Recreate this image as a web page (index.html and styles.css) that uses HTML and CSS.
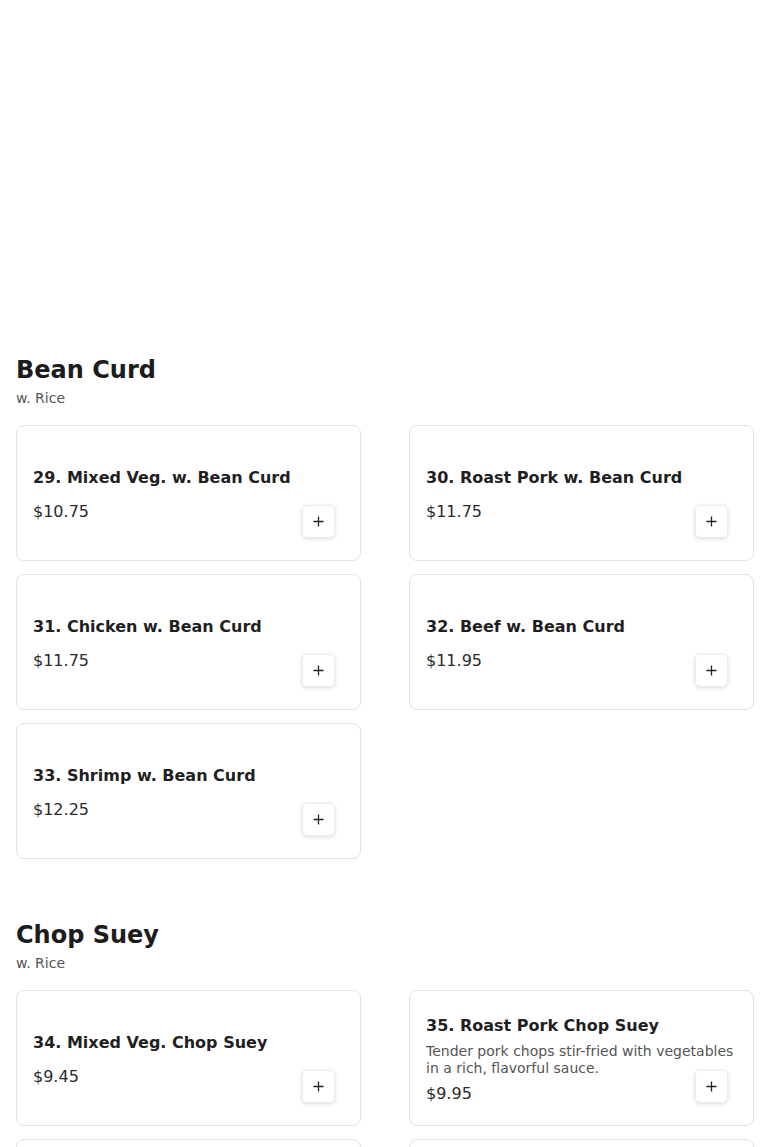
FILE: index.html
```html
<!DOCTYPE html>
<html>
<head>
<meta charset="utf-8">
<link rel="stylesheet" href="styles.css">
</head>
<body>
<div class="page">
  <div class="hero"></div>

  <section class="section">
    <h2 class="section-title">Bean Curd</h2>
    <p class="section-sub">w. Rice</p>
    <div class="grid">
      <div class="card">
        <h3 class="item-name">29. Mixed Veg. w. Bean Curd</h3>
        <div class="price">$10.75</div>
        <button class="add"><svg width="11" height="11" viewBox="0 0 11 11"><path d="M5.5 0.5v10M0.5 5.5h10" stroke="#222" stroke-width="1.3" fill="none"/></svg></button>
      </div>
      <div class="card">
        <h3 class="item-name">30. Roast Pork w. Bean Curd</h3>
        <div class="price">$11.75</div>
        <button class="add"><svg width="11" height="11" viewBox="0 0 11 11"><path d="M5.5 0.5v10M0.5 5.5h10" stroke="#222" stroke-width="1.3" fill="none"/></svg></button>
      </div>
      <div class="card">
        <h3 class="item-name">31. Chicken w. Bean Curd</h3>
        <div class="price">$11.75</div>
        <button class="add"><svg width="11" height="11" viewBox="0 0 11 11"><path d="M5.5 0.5v10M0.5 5.5h10" stroke="#222" stroke-width="1.3" fill="none"/></svg></button>
      </div>
      <div class="card">
        <h3 class="item-name">32. Beef w. Bean Curd</h3>
        <div class="price">$11.95</div>
        <button class="add"><svg width="11" height="11" viewBox="0 0 11 11"><path d="M5.5 0.5v10M0.5 5.5h10" stroke="#222" stroke-width="1.3" fill="none"/></svg></button>
      </div>
      <div class="card">
        <h3 class="item-name">33. Shrimp w. Bean Curd</h3>
        <div class="price">$12.25</div>
        <button class="add"><svg width="11" height="11" viewBox="0 0 11 11"><path d="M5.5 0.5v10M0.5 5.5h10" stroke="#222" stroke-width="1.3" fill="none"/></svg></button>
      </div>
    </div>
  </section>

  <section class="section">
    <h2 class="section-title">Chop Suey</h2>
    <p class="section-sub">w. Rice</p>
    <div class="grid">
      <div class="card">
        <h3 class="item-name">34. Mixed Veg. Chop Suey</h3>
        <div class="price">$9.45</div>
        <button class="add"><svg width="11" height="11" viewBox="0 0 11 11"><path d="M5.5 0.5v10M0.5 5.5h10" stroke="#222" stroke-width="1.3" fill="none"/></svg></button>
      </div>
      <div class="card">
        <h3 class="item-name">35. Roast Pork Chop Suey</h3>
        <p class="desc">Tender pork chops stir-fried with vegetables in a rich, flavorful sauce.</p>
        <div class="price">$9.95</div>
        <button class="add"><svg width="11" height="11" viewBox="0 0 11 11"><path d="M5.5 0.5v10M0.5 5.5h10" stroke="#222" stroke-width="1.3" fill="none"/></svg></button>
      </div>
      <div class="card">
        <h3 class="item-name">36. Chicken Chop Suey</h3>
        <div class="price">$9.95</div>
        <button class="add"><svg width="11" height="11" viewBox="0 0 11 11"><path d="M5.5 0.5v10M0.5 5.5h10" stroke="#222" stroke-width="1.3" fill="none"/></svg></button>
      </div>
      <div class="card">
        <h3 class="item-name">37. Beef Chop Suey</h3>
        <div class="price">$10.25</div>
        <button class="add"><svg width="11" height="11" viewBox="0 0 11 11"><path d="M5.5 0.5v10M0.5 5.5h10" stroke="#222" stroke-width="1.3" fill="none"/></svg></button>
      </div>
    </div>
  </section>
</div>
</body>
</html>
```
FILE: styles.css
```css
* { box-sizing: border-box; }
html, body { margin: 0; padding: 0; background: #fff; }
body {
  font-family: "DejaVu Sans", "Liberation Sans", sans-serif;
  color: #1f1f1f;
}
.page { padding: 0 16px; }
.hero { height: 356px; }
.section { margin-bottom: 62px; }
.section-title {
  margin: 0;
  font-size: 24px;
  line-height: 29px;
  font-weight: 700;
  color: #1c1c1c;
}
.section-sub {
  margin: 5px 0 0;
  font-size: 14px;
  line-height: 17px;
  color: #555;
}
.grid {
  margin-top: 18px;
  display: grid;
  grid-template-columns: 1fr 1fr;
  column-gap: 48px;
  row-gap: 13px;
}
.card {
  position: relative;
  min-height: 136px;
  border: 1px solid #e3e3e3;
  border-radius: 8px;
  padding: 20px 16px 16px;
  display: flex;
  flex-direction: column;
  justify-content: center;
  background: #fff;
}
.item-name {
  margin: 0 0 5px;
  font-size: 16px;
  line-height: 24px;
  font-weight: 700;
  color: #1f1f1f;
}
.desc {
  margin: 0;
  font-size: 14px;
  line-height: 17px;
  color: #555;
}
.price {
  margin-top: 5px;
  font-size: 16px;
  line-height: 24px;
  color: #2b2b2b;
}
.add {
  position: absolute;
  right: 25px;
  bottom: 22px;
  width: 33px;
  height: 33px;
  padding: 0;
  border: 1px solid #ececec;
  border-radius: 5px;
  background: #fff;
  box-shadow: 0 1px 4px rgba(0,0,0,0.14);
  display: flex;
  align-items: center;
  justify-content: center;
  cursor: pointer;
}
.add svg { display: block; }
```
